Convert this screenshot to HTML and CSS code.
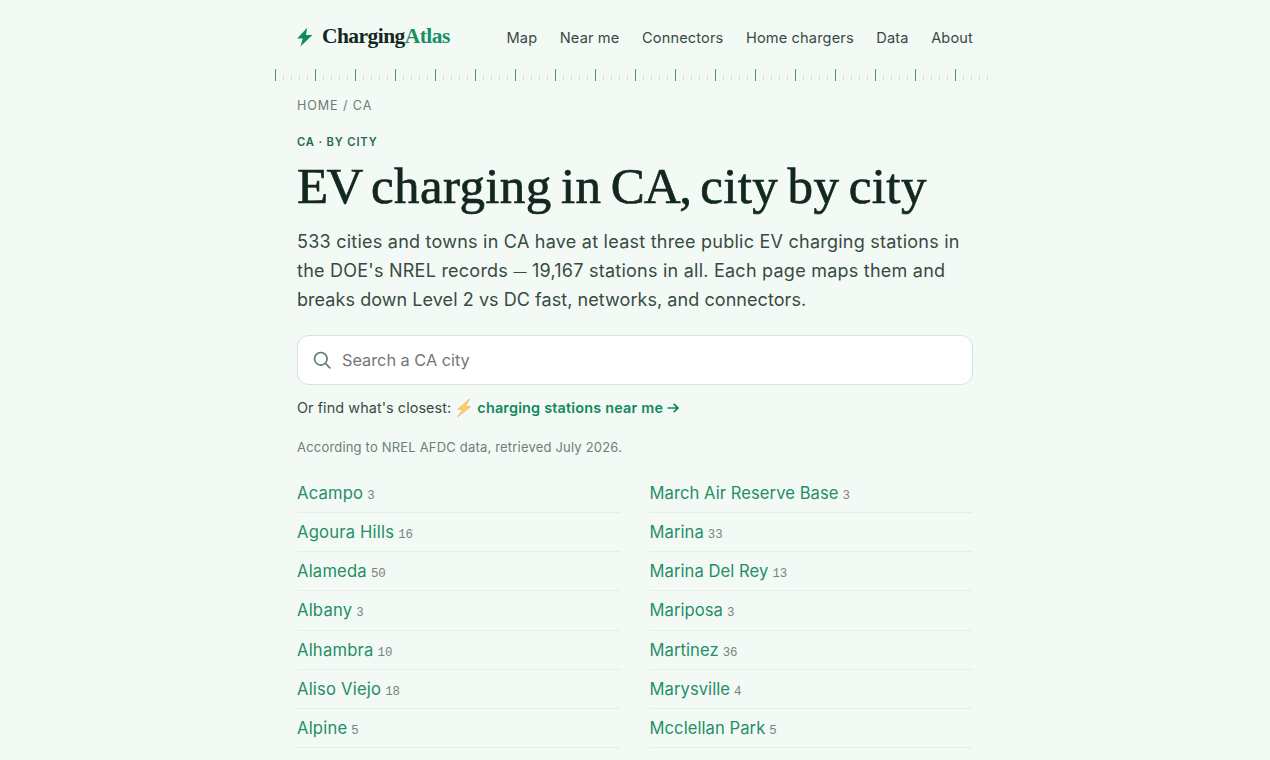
FILE: index.html
```html
<!DOCTYPE html>
<html lang="en">
<head>
<meta charset="utf-8">
<title>EV charging in CA, city by city | ChargingAtlas</title>
<link rel="stylesheet" href="styles.css">
</head>
<body>
<div class="page">
  <header class="header">
    <a class="brand" href="#">
      <svg class="brand-icon" viewBox="0 0 16 20"><path d="M10.2.8.2 11.4h5.6L3.4 19.4 15.4 8H9z"/></svg>
      <span class="brand-name">Charging<span class="brand-accent">Atlas</span></span>
    </a>
    <nav class="nav"><a href="#">Map</a><a href="#">Near me</a><a href="#">Connectors</a><a href="#">Home chargers</a><a href="#">Data</a><a href="#">About</a></nav>
  </header>
  <div class="ruler"></div>
  <main class="main">
    <div class="crumbs">HOME / CA</div>
    <div class="eyebrow">CA · BY CITY</div>
    <h1 class="title"><span class="caps">EV</span> charging in <span class="state">CA,</span> city by city</h1>
    <p class="lede"><span class="wide">533 cities and towns in CA have at least three public EV charging stations in</span><br><span class="wide">the DOE's NREL records <span class="dash">—</span> 19,167 stations in all. Each page maps them and</span><br><span>breaks down Level 2 vs DC fast, networks, and connectors.</span></p>
    <label class="search">
      <svg class="search-icon" viewBox="0 0 18 18"><circle cx="7.8" cy="7.8" r="6.3"/><path d="m12.5 12.5 4.3 4.3"/></svg>
      <input type="text" placeholder="Search a CA city">
    </label>
    <p class="closest"><span>Or find what's closest:</span><svg class="bolt" viewBox="0 0 16 20"><path d="M13.5 1 2.2 11l5 .6L1.6 18.8 14.4 8.8 9.4 8z"/></svg><a href="#">charging stations near me</a><svg class="arrow" viewBox="0 0 12 12"><path d="M.5 6h10.3M6.7 1.8 11 6l-4.3 4.2"/></svg></p>
    <p class="source">According to NREL AFDC data, retrieved July 2026.</p>
    <div class="cities">
      <ul>
        <li><a href="#">Acampo</a><small>3</small></li>
        <li><a href="#">Agoura Hills</a><small>16</small></li>
        <li><a href="#">Alameda</a><small>50</small></li>
        <li><a href="#">Albany</a><small>3</small></li>
        <li><a href="#">Alhambra</a><small>10</small></li>
        <li><a href="#">Aliso Viejo</a><small>18</small></li>
        <li><a href="#">Alpine</a><small>5</small></li>
      </ul>
      <ul>
        <li><a href="#">March Air Reserve Base</a><small>3</small></li>
        <li><a href="#">Marina</a><small>33</small></li>
        <li><a href="#">Marina Del Rey</a><small>13</small></li>
        <li><a href="#">Mariposa</a><small>3</small></li>
        <li><a href="#">Martinez</a><small>36</small></li>
        <li><a href="#">Marysville</a><small>4</small></li>
        <li><a href="#">Mcclellan Park</a><small>5</small></li>
      </ul>
    </div>
  </main>
</div>
</body>
</html>
```
FILE: styles.css
```css
* { box-sizing: border-box; }
html { overflow: hidden; }
body {
  margin: 0;
  background: #f3f9f5;
  color: #374b42;
  font-family: Inter, "Liberation Sans", sans-serif;
}
a { color: inherit; text-decoration: none; }
p, h1, ul { margin: 0; padding: 0; }
.page { width: 720px; height: 760px; margin: 0 auto; overflow: hidden; }
.header {
  height: 69px;
  padding: 0 22px;
  display: flex;
  justify-content: space-between;
}
.brand { display: flex; padding-top: 20px; }
.brand-icon { width: 16px; height: 20px; margin: 7px 9px 0 0; fill: #12895d; }
.brand-name {
  font: bold 21.5px/32px "Liberation Serif", serif;
  color: #12281f;
  letter-spacing: -0.56px;
}
.brand-accent { color: #1b8f64; }
.nav { display: flex; gap: 22.5px; padding-top: 26px; font-size: 14.6px; line-height: 24px; letter-spacing: 0.14px; }
.ruler {
  height: 12px;
  background:
    repeating-linear-gradient(90deg, #419a74 0 1px, transparent 1px 40px),
    repeating-linear-gradient(90deg, #d3e2d9 0 1px, transparent 1px 8px) 0 6px / 100% 6px no-repeat;
}
.main { padding: 15px 22px 0; }
.crumbs { font-size: 12.6px; line-height: 20px; letter-spacing: 0.9px; color: #6c7f76; }
.eyebrow { margin-top: 16px; font-size: 11.2px; line-height: 20px; font-weight: 600; letter-spacing: 0.85px; color: #246b4e; }
.title {
  margin-top: 6px;
  font: 400 51px/56px "Liberation Serif", serif;
  letter-spacing: 0.4px;
  word-spacing: -3.8px;
  color: #12281f;
  -webkit-text-stroke: 0.7px #12281f;
  white-space: nowrap;
}
.caps { letter-spacing: -1.7px; }
.state { letter-spacing: -1.2px; }
.lede { margin-top: 13px; font-size: 18px; line-height: 29px; letter-spacing: 0.06px; white-space: nowrap; }
.wide { letter-spacing: 0.237px; }
.dash { font-size: 13px; line-height: 1; }
.search {
  margin-top: 21px;
  height: 50px;
  display: flex;
  align-items: center;
  padding-left: 15px;
  gap: 11px;
  background: #fff;
  border: 1px solid #d5e5dc;
  border-radius: 12px;
}
.search-icon { width: 18px; height: 18px; fill: none; stroke: #5f7a6e; stroke-width: 1.7; stroke-linecap: round; }
.search input {
  flex: 1;
  padding: 0;
  border: 0;
  outline: 0;
  background: none;
  font: 16.3px Inter, sans-serif;
}
.search input::placeholder { color: #757575; }
.closest { margin-top: 11px; display: flex; align-items: center; font-size: 14.4px; line-height: 24px; letter-spacing: 0.08px; }
.closest a { color: #12895d; font-weight: 600; letter-spacing: 0.2px; }
.bolt { width: 16px; height: 20px; margin: 0 5px; fill: #fcd160; stroke: #f5b062; stroke-width: .8; }
.arrow { width: 12px; height: 12px; margin-left: 4px; fill: none; stroke: #12895d; stroke-width: 1.7; }
.source { margin-top: 17px; font-size: 13px; line-height: 20px; letter-spacing: 0.19px; color: #6c7f76; }
.cities { margin-top: 16.8px; display: grid; grid-template-columns: 1fr 1fr; gap: 29px; }
.cities ul { list-style: none; }
.cities li {
  height: 39.2px;
  display: flex;
  align-items: baseline;
  gap: 4px;
  border-bottom: 1px solid #e5eee9;
  font-size: 16.6px;
  line-height: 38px;
  letter-spacing: 0.2px;
  color: #1f8f66;
}
.cities ul + ul li { letter-spacing: 0.06px; }
.cities small { font: 12.4px "Liberation Mono", monospace; letter-spacing: 0; color: #75857d; }
```
